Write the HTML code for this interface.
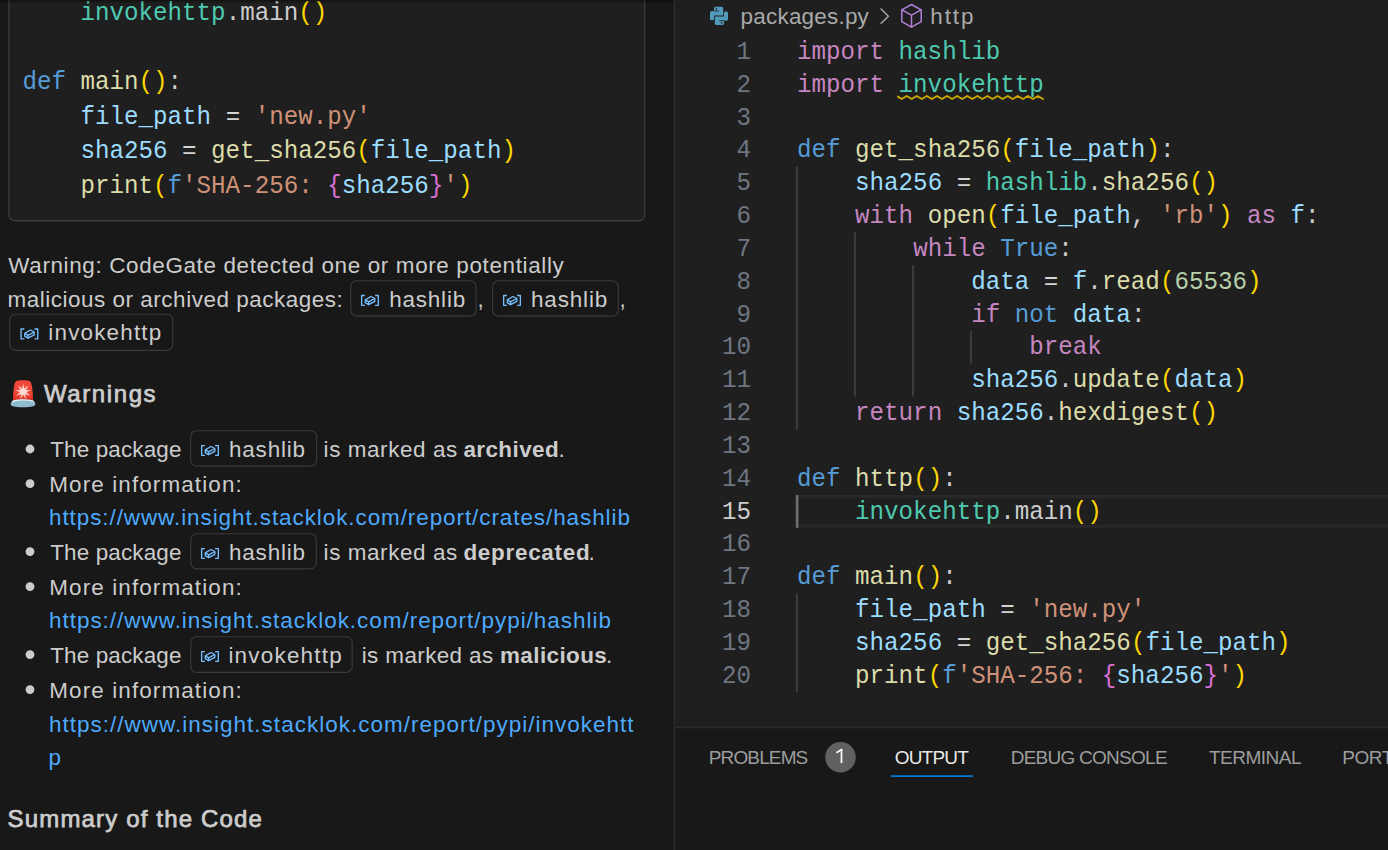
<!DOCTYPE html>
<html><head><meta charset="utf-8"><title>VS Code</title>
<style>html,body{margin:0;padding:0;width:1388px;height:850px;overflow:hidden;background:#181818;}
body{position:relative;font-family:"Liberation Sans", sans-serif;}
svg text{white-space:pre;}</style></head>
<body>
<svg width="1388" height="850" viewBox="0 0 1388 850" style="position:absolute;left:0;top:0" font-family='"Liberation Sans", sans-serif'><defs><linearGradient id="sh" x1="0" y1="0" x2="0" y2="1"><stop offset="0" stop-color="#000" stop-opacity="0.45"/><stop offset="1" stop-color="#000" stop-opacity="0"/></linearGradient></defs><rect x="0" y="0" width="675" height="850" fill="#181818"/><rect x="675" y="0" width="713" height="727" fill="#1f1f1f"/><rect x="675" y="727" width="713" height="123" fill="#181818"/><rect x="675" y="726.6" width="713" height="1.7" fill="#2b2b2b"/><rect x="673.6" y="0" width="1.6" height="850" fill="#2b2b2b"/><rect x="8.85" y="-20" width="635.8" height="240.7" rx="6" fill="#1f1f1f" stroke="#3b3b3b" stroke-width="1.35"/><g font-family='"Liberation Mono", monospace' font-size="24.19"><g transform="matrix(1 0 0 1.07 0 -1.400)"><text x="80.47" y="20.00" fill="#4ec9b0">invokehttp</text><text x="225.63" y="20.00" fill="#cccccc">.</text><text x="240.15" y="20.00" fill="#cccccc">main</text><text x="298.21" y="20.00" fill="#ffd700">()</text></g><g transform="matrix(1 0 0 1.07 0 -6.238)"><text x="22.40" y="89.12" fill="#569cd6">def</text><text x="80.47" y="89.12" fill="#dcdcaa">main</text><text x="138.53" y="89.12" fill="#ffd700">()</text><text x="167.56" y="89.12" fill="#cccccc">:</text></g><g transform="matrix(1 0 0 1.07 0 -8.658)"><text x="80.47" y="123.68" fill="#9cdcfe">file_path</text><text x="225.63" y="123.68" fill="#d4d4d4">=</text><text x="254.66" y="123.68" fill="#ce9178">'new.py'</text></g><g transform="matrix(1 0 0 1.07 0 -11.077)"><text x="80.47" y="158.24" fill="#9cdcfe">sha256</text><text x="182.08" y="158.24" fill="#d4d4d4">=</text><text x="211.11" y="158.24" fill="#dcdcaa">get_sha256</text><text x="356.28" y="158.24" fill="#ffd700">(</text><text x="370.79" y="158.24" fill="#9cdcfe">file_path</text><text x="501.44" y="158.24" fill="#ffd700">)</text></g><g transform="matrix(1 0 0 1.07 0 -13.496)"><text x="80.47" y="192.80" fill="#dcdcaa">print</text><text x="153.05" y="192.80" fill="#ffd700">(</text><text x="167.56" y="192.80" fill="#569cd6">f</text><text x="182.08" y="192.80" fill="#ce9178">'SHA-256: </text><text x="327.24" y="192.80" fill="#da70d6">{</text><text x="341.76" y="192.80" fill="#9cdcfe">sha256</text><text x="428.86" y="192.80" fill="#da70d6">}</text><text x="443.37" y="192.80" fill="#ce9178">'</text><text x="457.89" y="192.80" fill="#ffd700">)</text></g></g><rect x="0" y="0" width="673.6" height="3.6" fill="url(#sh)"/><rect x="350.80" y="280.70" width="125.30" height="35.40" rx="6" fill="none" stroke="#3a3a3a" stroke-width="1.15"/><g transform="translate(361.00,294.90)" fill="none" stroke="#75beff" stroke-width="1.35" stroke-linejoin="round"><path d="M3.9 0.65 H0.65 V10.45 H3.9"/><path d="M14.1 0.65 H17.35 V10.45 H14.1"/><path d="M4.3 5.0 L10.0 1.6 L13.8 3.6 L13.8 6.5 L7.6 9.8 L4.3 7.8 Z"/><path d="M4.3 5.0 L7.6 7.0 L13.8 3.6"/><path d="M7.6 7.0 V9.8"/></g><rect x="492.60" y="280.70" width="125.70" height="35.40" rx="6" fill="none" stroke="#3a3a3a" stroke-width="1.15"/><g transform="translate(503.00,294.90)" fill="none" stroke="#75beff" stroke-width="1.35" stroke-linejoin="round"><path d="M3.9 0.65 H0.65 V10.45 H3.9"/><path d="M14.1 0.65 H17.35 V10.45 H14.1"/><path d="M4.3 5.0 L10.0 1.6 L13.8 3.6 L13.8 6.5 L7.6 9.8 L4.3 7.8 Z"/><path d="M4.3 5.0 L7.6 7.0 L13.8 3.6"/><path d="M7.6 7.0 V9.8"/></g><rect x="9.70" y="314.20" width="163.10" height="36.10" rx="6" fill="none" stroke="#3a3a3a" stroke-width="1.15"/><g transform="translate(20.40,328.40)" fill="none" stroke="#75beff" stroke-width="1.35" stroke-linejoin="round"><path d="M3.9 0.65 H0.65 V10.45 H3.9"/><path d="M14.1 0.65 H17.35 V10.45 H14.1"/><path d="M4.3 5.0 L10.0 1.6 L13.8 3.6 L13.8 6.5 L7.6 9.8 L4.3 7.8 Z"/><path d="M4.3 5.0 L7.6 7.0 L13.8 3.6"/><path d="M7.6 7.0 V9.8"/></g><rect x="190.60" y="430.70" width="126.00" height="35.40" rx="6" fill="none" stroke="#3a3a3a" stroke-width="1.15"/><g transform="translate(201.00,444.90)" fill="none" stroke="#75beff" stroke-width="1.35" stroke-linejoin="round"><path d="M3.9 0.65 H0.65 V10.45 H3.9"/><path d="M14.1 0.65 H17.35 V10.45 H14.1"/><path d="M4.3 5.0 L10.0 1.6 L13.8 3.6 L13.8 6.5 L7.6 9.8 L4.3 7.8 Z"/><path d="M4.3 5.0 L7.6 7.0 L13.8 3.6"/><path d="M7.6 7.0 V9.8"/></g><rect x="190.80" y="533.70" width="125.50" height="35.10" rx="6" fill="none" stroke="#3a3a3a" stroke-width="1.15"/><g transform="translate(201.00,547.90)" fill="none" stroke="#75beff" stroke-width="1.35" stroke-linejoin="round"><path d="M3.9 0.65 H0.65 V10.45 H3.9"/><path d="M14.1 0.65 H17.35 V10.45 H14.1"/><path d="M4.3 5.0 L10.0 1.6 L13.8 3.6 L13.8 6.5 L7.6 9.8 L4.3 7.8 Z"/><path d="M4.3 5.0 L7.6 7.0 L13.8 3.6"/><path d="M7.6 7.0 V9.8"/></g><rect x="190.80" y="636.70" width="161.40" height="35.70" rx="6" fill="none" stroke="#3a3a3a" stroke-width="1.15"/><g transform="translate(201.00,650.90)" fill="none" stroke="#75beff" stroke-width="1.35" stroke-linejoin="round"><path d="M3.9 0.65 H0.65 V10.45 H3.9"/><path d="M14.1 0.65 H17.35 V10.45 H14.1"/><path d="M4.3 5.0 L10.0 1.6 L13.8 3.6 L13.8 6.5 L7.6 9.8 L4.3 7.8 Z"/><path d="M4.3 5.0 L7.6 7.0 L13.8 3.6"/><path d="M7.6 7.0 V9.8"/></g><circle cx="30" cy="449.00" r="4.4" fill="#cccccc"/><circle cx="30" cy="483.70" r="4.4" fill="#cccccc"/><circle cx="30" cy="551.60" r="4.4" fill="#cccccc"/><circle cx="30" cy="586.60" r="4.4" fill="#cccccc"/><circle cx="30" cy="654.60" r="4.4" fill="#cccccc"/><circle cx="30" cy="689.60" r="4.4" fill="#cccccc"/><defs><linearGradient id="dome" x1="0" y1="0" x2="0" y2="1"><stop offset="0" stop-color="#f0493c"/><stop offset="0.75" stop-color="#ec3f30"/><stop offset="1" stop-color="#c9261c"/></linearGradient><radialGradient id="glow" cx="0.5" cy="0.5" r="0.5"><stop offset="0" stop-color="#ff9a80"/><stop offset="1" stop-color="#f0493c" stop-opacity="0"/></radialGradient></defs><g transform="translate(10,379)"><path d="M3 22.3 C3 15 3.6 8 4.8 4.2 C5.6 1.9 7 1.2 13 1.2 C19 1.2 20.4 1.9 21.2 4.2 C22.4 8 23 15 23 22.3 Z" fill="url(#dome)"/><circle cx="13.2" cy="12.5" r="8" fill="url(#glow)"/><polygon points="13.20,4.40 14.23,9.78 18.47,6.32 15.80,11.10 21.28,11.18 16.15,13.12 20.30,16.70 15.13,14.90 16.00,20.31 13.20,15.60 10.40,20.31 11.27,14.90 6.10,16.70 10.25,13.12 5.12,11.18 10.60,11.10 7.93,6.32 12.17,9.78" fill="#ffd9d0"/><path d="M0.7 25 C0.7 22.2 3 20.4 13 20.4 C23 20.4 25.3 22.2 25.3 25 C25.3 27.3 22 28.2 13 28.2 C4 28.2 0.7 27.3 0.7 25 Z" fill="#8fbccd"/><path d="M2.2 22.6 C4.5 21.2 8.5 20.8 13 20.8 C17.5 20.8 21.5 21.2 23.8 22.6" fill="none" stroke="#e4f1f5" stroke-width="1.3"/></g><text x="8.30" y="272.90" font-size="22.46" font-weight="400" fill="#cccccc" letter-spacing="0.629">Warning: CodeGate detected one or more potentially</text><text x="7.50" y="306.70" font-size="22.46" font-weight="400" fill="#cccccc" letter-spacing="0.525">malicious or archived packages:</text><text x="477.50" y="306.70" font-size="22.46" font-weight="400" fill="#cccccc" letter-spacing="0.000">,</text><text x="619.60" y="306.70" font-size="22.46" font-weight="400" fill="#cccccc" letter-spacing="0.000">,</text><text x="389.20" y="306.70" font-size="22.46" font-weight="400" fill="#cccccc" letter-spacing="0.806">hashlib</text><text x="531.00" y="306.70" font-size="22.46" font-weight="400" fill="#cccccc" letter-spacing="0.856">hashlib</text><text x="48.30" y="340.40" font-size="22.46" font-weight="400" fill="#cccccc" letter-spacing="1.181">invokehttp</text><text x="44.00" y="402.00" font-size="24" font-weight="400" fill="#cccccc" stroke="#cccccc" stroke-width="0.75" letter-spacing="1.589">Warnings</text><text x="50.20" y="457.00" font-size="22.46" font-weight="400" fill="#cccccc" letter-spacing="0.147">The package</text><text x="229.00" y="457.00" font-size="22.46" font-weight="400" fill="#cccccc" letter-spacing="0.822">hashlib</text><text x="323.60" y="457.00" font-size="22.46" font-weight="400" fill="#cccccc" letter-spacing="0.577">is marked as</text><text x="463.40" y="457.00" font-size="22.46" font-weight="700" fill="#cccccc" letter-spacing="0.423">archived</text><text x="558.50" y="457.00" font-size="22.46" font-weight="400" fill="#cccccc" letter-spacing="0.000">.</text><text x="49.30" y="491.70" font-size="22.46" font-weight="400" fill="#cccccc" letter-spacing="1.108">More information:</text><text x="49.00" y="525.20" font-size="22.46" font-weight="400" fill="#4daafc" letter-spacing="0.930">https://www.insight.stacklok.com/report/crates/hashlib</text><text x="50.20" y="559.60" font-size="22.46" font-weight="400" fill="#cccccc" letter-spacing="0.147">The package</text><text x="229.00" y="559.60" font-size="22.46" font-weight="400" fill="#cccccc" letter-spacing="0.822">hashlib</text><text x="323.60" y="559.60" font-size="22.46" font-weight="400" fill="#cccccc" letter-spacing="0.577">is marked as</text><text x="463.40" y="559.60" font-size="22.46" font-weight="700" fill="#cccccc" letter-spacing="0.724">deprecated</text><text x="588.50" y="559.60" font-size="22.46" font-weight="400" fill="#cccccc" letter-spacing="0.000">.</text><text x="49.30" y="594.60" font-size="22.46" font-weight="400" fill="#cccccc" letter-spacing="1.108">More information:</text><text x="49.00" y="628.00" font-size="22.46" font-weight="400" fill="#4daafc" letter-spacing="0.985">https://www.insight.stacklok.com/report/pypi/hashlib</text><text x="50.20" y="662.60" font-size="22.46" font-weight="400" fill="#cccccc" letter-spacing="0.147">The package</text><text x="228.40" y="662.60" font-size="22.46" font-weight="400" fill="#cccccc" letter-spacing="1.215">invokehttp</text><text x="361.70" y="662.60" font-size="22.46" font-weight="400" fill="#cccccc" letter-spacing="0.387">is marked as</text><text x="500.00" y="662.60" font-size="22.46" font-weight="700" fill="#cccccc" letter-spacing="0.402">malicious</text><text x="606.00" y="662.60" font-size="22.46" font-weight="400" fill="#cccccc" letter-spacing="0.000">.</text><text x="49.30" y="697.60" font-size="22.46" font-weight="400" fill="#cccccc" letter-spacing="1.108">More information:</text><text x="49.00" y="731.50" font-size="22.46" font-weight="400" fill="#4daafc" letter-spacing="1.022">https://www.insight.stacklok.com/report/pypi/invokehtt</text><text x="48.50" y="764.50" font-size="22.46" font-weight="400" fill="#4daafc" letter-spacing="0.000">p</text><text x="7.60" y="826.90" font-size="24" font-weight="400" fill="#cccccc" stroke="#cccccc" stroke-width="0.75" letter-spacing="1.156">Summary of the Code</text><text x="740.60" y="23.50" font-size="22.46" font-weight="400" fill="#a9a9a9" letter-spacing="0.216">packages.py</text><text x="930.30" y="23.50" font-size="22.46" font-weight="400" fill="#a9a9a9" letter-spacing="1.912">http</text><text x="708.80" y="764.00" font-size="19" font-weight="400" fill="#9d9d9d" letter-spacing="-0.873">PROBLEMS</text><text x="894.70" y="764.00" font-size="19" font-weight="400" fill="#e7e7e7" letter-spacing="-0.800">OUTPUT</text><text x="1010.70" y="764.00" font-size="19" font-weight="400" fill="#9d9d9d" letter-spacing="-0.740">DEBUG CONSOLE</text><text x="1209.00" y="764.00" font-size="19" font-weight="400" fill="#9d9d9d" letter-spacing="-0.500">TERMINAL</text><text x="1342.30" y="764" font-size="19" fill="#9d9d9d" letter-spacing="-0.500">PORTS</text><rect x="797" y="494.96" width="591" height="3.2" fill="#282828"/><rect x="797" y="524.60" width="591" height="3.2" fill="#282828"/><rect x="796.00" y="166.56" width="1.73" height="262.72" fill="#404040"/><rect x="854.07" y="232.24" width="1.73" height="164.20" fill="#404040"/><rect x="912.13" y="265.08" width="1.73" height="131.36" fill="#404040"/><rect x="970.20" y="330.76" width="1.73" height="32.84" fill="#404040"/><rect x="796.00" y="593.48" width="1.73" height="98.52" fill="#404040"/><rect x="795.80" y="494.96" width="2.6" height="32.84" fill="#707070"/><g font-family='"Liberation Mono", monospace' font-size="24.19"><text x="751.00" y="58.90" text-anchor="end" fill="#6e7681" transform="matrix(1 0 0 1.07 0 -4.123)">1</text><text x="751.00" y="91.74" text-anchor="end" fill="#6e7681" transform="matrix(1 0 0 1.07 0 -6.422)">2</text><text x="751.00" y="124.58" text-anchor="end" fill="#6e7681" transform="matrix(1 0 0 1.07 0 -8.721)">3</text><text x="751.00" y="157.42" text-anchor="end" fill="#6e7681" transform="matrix(1 0 0 1.07 0 -11.019)">4</text><text x="751.00" y="190.26" text-anchor="end" fill="#6e7681" transform="matrix(1 0 0 1.07 0 -13.318)">5</text><text x="751.00" y="223.10" text-anchor="end" fill="#6e7681" transform="matrix(1 0 0 1.07 0 -15.617)">6</text><text x="751.00" y="255.94" text-anchor="end" fill="#6e7681" transform="matrix(1 0 0 1.07 0 -17.916)">7</text><text x="751.00" y="288.78" text-anchor="end" fill="#6e7681" transform="matrix(1 0 0 1.07 0 -20.215)">8</text><text x="751.00" y="321.62" text-anchor="end" fill="#6e7681" transform="matrix(1 0 0 1.07 0 -22.513)">9</text><text x="751.00" y="354.46" text-anchor="end" fill="#6e7681" transform="matrix(1 0 0 1.07 0 -24.812)">10</text><text x="751.00" y="387.30" text-anchor="end" fill="#6e7681" transform="matrix(1 0 0 1.07 0 -27.111)">11</text><text x="751.00" y="420.14" text-anchor="end" fill="#6e7681" transform="matrix(1 0 0 1.07 0 -29.410)">12</text><text x="751.00" y="452.98" text-anchor="end" fill="#6e7681" transform="matrix(1 0 0 1.07 0 -31.709)">13</text><text x="751.00" y="485.82" text-anchor="end" fill="#6e7681" transform="matrix(1 0 0 1.07 0 -34.007)">14</text><text x="751.00" y="518.66" text-anchor="end" fill="#cccccc" transform="matrix(1 0 0 1.07 0 -36.306)">15</text><text x="751.00" y="551.50" text-anchor="end" fill="#6e7681" transform="matrix(1 0 0 1.07 0 -38.605)">16</text><text x="751.00" y="584.34" text-anchor="end" fill="#6e7681" transform="matrix(1 0 0 1.07 0 -40.904)">17</text><text x="751.00" y="617.18" text-anchor="end" fill="#6e7681" transform="matrix(1 0 0 1.07 0 -43.203)">18</text><text x="751.00" y="650.02" text-anchor="end" fill="#6e7681" transform="matrix(1 0 0 1.07 0 -45.501)">19</text><text x="751.00" y="682.86" text-anchor="end" fill="#6e7681" transform="matrix(1 0 0 1.07 0 -47.800)">20</text><g transform="matrix(1 0 0 1.07 0 -4.123)"><text x="797.00" y="58.90" fill="#c586c0">import</text><text x="898.61" y="58.90" fill="#4ec9b0">hashlib</text></g><g transform="matrix(1 0 0 1.07 0 -6.422)"><text x="797.00" y="91.74" fill="#c586c0">import</text><text x="898.61" y="91.74" fill="#4ec9b0">invokehttp</text></g><g transform="matrix(1 0 0 1.07 0 -11.019)"><text x="797.00" y="157.42" fill="#569cd6">def</text><text x="855.07" y="157.42" fill="#dcdcaa">get_sha256</text><text x="1000.23" y="157.42" fill="#ffd700">(</text><text x="1014.75" y="157.42" fill="#9cdcfe">file_path</text><text x="1145.39" y="157.42" fill="#ffd700">)</text><text x="1159.91" y="157.42" fill="#cccccc">:</text></g><g transform="matrix(1 0 0 1.07 0 -13.318)"><text x="855.07" y="190.26" fill="#9cdcfe">sha256</text><text x="956.68" y="190.26" fill="#d4d4d4">=</text><text x="985.71" y="190.26" fill="#4ec9b0">hashlib</text><text x="1087.33" y="190.26" fill="#cccccc">.</text><text x="1101.84" y="190.26" fill="#dcdcaa">sha256</text><text x="1188.94" y="190.26" fill="#ffd700">()</text></g><g transform="matrix(1 0 0 1.07 0 -15.617)"><text x="855.07" y="223.10" fill="#c586c0">with</text><text x="927.65" y="223.10" fill="#dcdcaa">open</text><text x="985.71" y="223.10" fill="#ffd700">(</text><text x="1000.23" y="223.10" fill="#9cdcfe">file_path</text><text x="1130.88" y="223.10" fill="#cccccc">,</text><text x="1159.91" y="223.10" fill="#ce9178">'rb'</text><text x="1217.97" y="223.10" fill="#ffd700">)</text><text x="1247.01" y="223.10" fill="#c586c0">as</text><text x="1290.56" y="223.10" fill="#9cdcfe">f</text><text x="1305.07" y="223.10" fill="#cccccc">:</text></g><g transform="matrix(1 0 0 1.07 0 -17.916)"><text x="913.13" y="255.94" fill="#c586c0">while</text><text x="1000.23" y="255.94" fill="#569cd6">True</text><text x="1058.29" y="255.94" fill="#cccccc">:</text></g><g transform="matrix(1 0 0 1.07 0 -20.215)"><text x="971.20" y="288.78" fill="#9cdcfe">data</text><text x="1043.78" y="288.78" fill="#d4d4d4">=</text><text x="1072.81" y="288.78" fill="#9cdcfe">f</text><text x="1087.33" y="288.78" fill="#cccccc">.</text><text x="1101.84" y="288.78" fill="#dcdcaa">read</text><text x="1159.91" y="288.78" fill="#ffd700">(</text><text x="1174.43" y="288.78" fill="#b5cea8">65536</text><text x="1247.01" y="288.78" fill="#ffd700">)</text></g><g transform="matrix(1 0 0 1.07 0 -22.513)"><text x="971.20" y="321.62" fill="#c586c0">if</text><text x="1014.75" y="321.62" fill="#569cd6">not</text><text x="1072.81" y="321.62" fill="#9cdcfe">data</text><text x="1130.88" y="321.62" fill="#cccccc">:</text></g><g transform="matrix(1 0 0 1.07 0 -24.812)"><text x="1029.26" y="354.46" fill="#c586c0">break</text></g><g transform="matrix(1 0 0 1.07 0 -27.111)"><text x="971.20" y="387.30" fill="#9cdcfe">sha256</text><text x="1058.29" y="387.30" fill="#cccccc">.</text><text x="1072.81" y="387.30" fill="#dcdcaa">update</text><text x="1159.91" y="387.30" fill="#ffd700">(</text><text x="1174.43" y="387.30" fill="#9cdcfe">data</text><text x="1232.49" y="387.30" fill="#ffd700">)</text></g><g transform="matrix(1 0 0 1.07 0 -29.410)"><text x="855.07" y="420.14" fill="#c586c0">return</text><text x="956.68" y="420.14" fill="#9cdcfe">sha256</text><text x="1043.78" y="420.14" fill="#cccccc">.</text><text x="1058.29" y="420.14" fill="#dcdcaa">hexdigest</text><text x="1188.94" y="420.14" fill="#ffd700">()</text></g><g transform="matrix(1 0 0 1.07 0 -34.007)"><text x="797.00" y="485.82" fill="#569cd6">def</text><text x="855.07" y="485.82" fill="#dcdcaa">http</text><text x="913.13" y="485.82" fill="#ffd700">()</text><text x="942.16" y="485.82" fill="#cccccc">:</text></g><g transform="matrix(1 0 0 1.07 0 -36.306)"><text x="855.07" y="518.66" fill="#4ec9b0">invokehttp</text><text x="1000.23" y="518.66" fill="#cccccc">.</text><text x="1014.75" y="518.66" fill="#cccccc">main</text><text x="1072.81" y="518.66" fill="#ffd700">()</text></g><g transform="matrix(1 0 0 1.07 0 -40.904)"><text x="797.00" y="584.34" fill="#569cd6">def</text><text x="855.07" y="584.34" fill="#dcdcaa">main</text><text x="913.13" y="584.34" fill="#ffd700">()</text><text x="942.16" y="584.34" fill="#cccccc">:</text></g><g transform="matrix(1 0 0 1.07 0 -43.203)"><text x="855.07" y="617.18" fill="#9cdcfe">file_path</text><text x="1000.23" y="617.18" fill="#d4d4d4">=</text><text x="1029.26" y="617.18" fill="#ce9178">'new.py'</text></g><g transform="matrix(1 0 0 1.07 0 -45.501)"><text x="855.07" y="650.02" fill="#9cdcfe">sha256</text><text x="956.68" y="650.02" fill="#d4d4d4">=</text><text x="985.71" y="650.02" fill="#dcdcaa">get_sha256</text><text x="1130.88" y="650.02" fill="#ffd700">(</text><text x="1145.39" y="650.02" fill="#9cdcfe">file_path</text><text x="1276.04" y="650.02" fill="#ffd700">)</text></g><g transform="matrix(1 0 0 1.07 0 -47.800)"><text x="855.07" y="682.86" fill="#dcdcaa">print</text><text x="927.65" y="682.86" fill="#ffd700">(</text><text x="942.16" y="682.86" fill="#569cd6">f</text><text x="956.68" y="682.86" fill="#ce9178">'SHA-256: </text><text x="1101.84" y="682.86" fill="#da70d6">{</text><text x="1116.36" y="682.86" fill="#9cdcfe">sha256</text><text x="1203.46" y="682.86" fill="#da70d6">}</text><text x="1217.97" y="682.86" fill="#ce9178">'</text><text x="1232.49" y="682.86" fill="#ffd700">)</text></g></g><polyline points="898.00,96.60 901.60,99.00 906.65,95.95 911.70,99.00 916.75,95.95 921.80,99.00 926.85,95.95 931.90,99.00 936.95,95.95 942.00,99.00 947.05,95.95 952.10,99.00 957.15,95.95 962.20,99.00 967.25,95.95 972.30,99.00 977.35,95.95 982.40,99.00 987.45,95.95 992.50,99.00 997.55,95.95 1002.60,99.00 1007.65,95.95 1012.70,99.00 1017.75,95.95 1022.80,99.00 1027.85,95.95 1032.90,99.00 1037.95,95.95 1043.00,99.00" fill="none" stroke="#cca700" stroke-width="1.9" stroke-linejoin="round" stroke-linecap="round"/><g transform="translate(710,6.8)"><path d="M4 1.6 Q4 0 5.6 0 H11.6 Q13.2 0 13.2 1.6 V8.6 H4 V11.9 Q4 13.5 2.4 13.5 H1.6 Q0 13.5 0 11.9 V5.9 Q0 4.3 1.6 4.3 H4 Z" fill="#519aba"/><path d="M4 1.6 Q4 0 5.6 0 H11.6 Q13.2 0 13.2 1.6 V8.6 H4 V11.9 Q4 13.5 2.4 13.5 H1.6 Q0 13.5 0 11.9 V5.9 Q0 4.3 1.6 4.3 H4 Z" fill="#519aba" transform="rotate(180 9 9.1)"/><rect x="4" y="3.9" width="4.8" height="0.8" fill="#1f1f1f"/><rect x="9.2" y="13.5" width="4.8" height="0.8" fill="#1f1f1f"/><circle cx="6.4" cy="2.2" r="0.85" fill="#1f1f1f"/><circle cx="11.6" cy="16.0" r="0.85" fill="#1f1f1f"/></g><path d="M880.6 8.5 L888.4 16.2 L880.6 23.8" fill="none" stroke="#a9a9a9" stroke-width="1.4"/><g fill="none" stroke="#b180d7" stroke-width="1.5" stroke-linejoin="round"><path d="M911.5 4.5 L921.2 9.9 L921.2 21.7 L911.5 27.2 L901.8 21.7 L901.8 9.9 Z"/><path d="M901.8 9.9 L911.5 15.2 L921.2 9.9 M911.5 15.2 V27.2"/></g><circle cx="840.5" cy="757.3" r="15.3" fill="#616161"/><rect x="840.6" y="748.9" width="1.8" height="14.2" fill="#f8f8f8"/><path d="M841.6 749.6 L836.9 752.4" stroke="#f8f8f8" stroke-width="1.7" stroke-linecap="round"/><rect x="890.8" y="775.2" width="82.2" height="1.8" fill="#0078d4"/></svg>
</body></html>
